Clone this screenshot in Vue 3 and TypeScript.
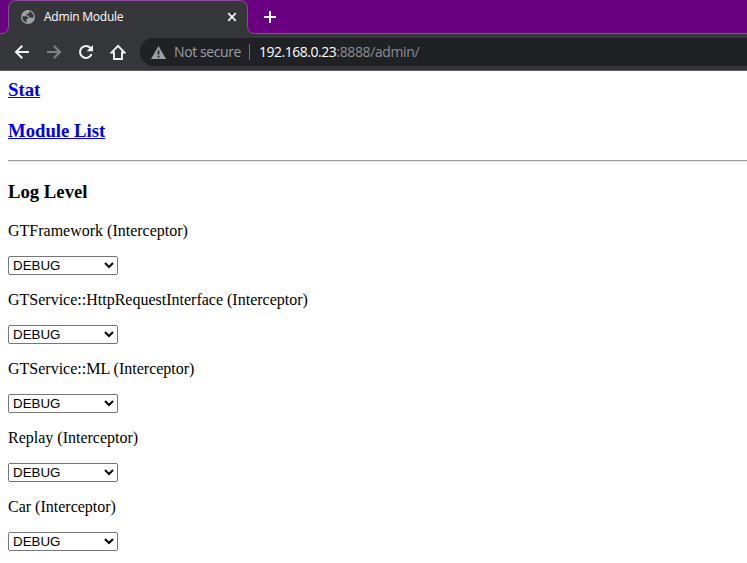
<script setup lang="ts">
import { reactive } from 'vue'

interface LogModule {
  name: string
  level: string
}

const levels: string[] = ['DEBUG', 'INFORMATION', 'WARNING', 'ERROR']

const modules = reactive<LogModule[]>([
  { name: 'GTFramework (Interceptor)', level: 'DEBUG' },
  { name: 'GTService::HttpRequestInterface (Interceptor)', level: 'DEBUG' },
  { name: 'GTService::ML (Interceptor)', level: 'DEBUG' },
  { name: 'Replay (Interceptor)', level: 'DEBUG' },
  { name: 'Car (Interceptor)', level: 'DEBUG' },
])
</script>

<template>
  <div class="window">
    <header class="chrome">
      <div class="tabstrip">
        <svg class="tab-shape" width="747" height="34" viewBox="0 0 747 34">
          <path
            d="M-2 36V33.500H1Q8.500 33.500 8.500 26V8.500Q8.500 .5 16.500 .5H239.500Q247.500 .5 247.500 8.500V25.500Q247.500 33.500 255.500 33.500H750V36Z"
            fill="#35363a"
            stroke="#8f4a9f"
          />
        </svg>
        <div class="tab">
          <svg class="globe" width="16" height="16" viewBox="0 0 16 16">
            <circle cx="8" cy="8" r="7" fill="#9aa0a6" />
            <path
              d="M2.300 7.300H6.200Q8.700 7.600 8.200 9.800H6.500V13.600Q2.600 12.600 2.300 7.300ZM9 2.500Q13 3 13.700 7.300L12.500 9L11 8.500H9.500L8.500 6.600H6.500V4.800H9Z"
              fill="#35363a"
            />
          </svg>
          <span class="tab-title">Admin Module</span>
          <svg class="close" width="10" height="10" viewBox="0 0 10 10">
            <path d="M1.200 1.200L8.800 8.800M8.800 1.200L1.200 8.800" stroke="#f1f3f4" stroke-width="1.700" />
          </svg>
        </div>
        <svg class="new-tab" width="12" height="12" viewBox="0 0 12 12">
          <path d="M6 0V12M0 6H12" stroke="#fff" stroke-width="2" />
        </svg>
      </div>
      <div class="toolbar">
        <div class="nav">
          <svg width="16" height="16" viewBox="0 0 16 16">
            <path d="M15 8H2.500M8.300 1.700L2 8L8.300 14.300" fill="none" stroke="#f1f3f4" stroke-width="2" />
          </svg>
          <svg width="16" height="16" viewBox="0 0 16 16">
            <path d="M1 8H13.500M7.700 1.700L14 8L7.700 14.300" fill="none" stroke="#818286" stroke-width="2" />
          </svg>
          <svg width="16" height="16" viewBox="0 0 16 16">
            <path d="M13.600 10.200A6 6 0 1 1 12.500 4" fill="none" stroke="#f1f3f4" stroke-width="2" />
            <path d="M15 1V7.300H8.700Z" fill="#f1f3f4" />
          </svg>
          <svg width="16" height="16" viewBox="0 0 16 16">
            <path
              d="M1.500 8.500H4V15H12V8.500H14.500L8 1.800Z"
              fill="none"
              stroke="#f1f3f4"
              stroke-width="1.900"
            />
          </svg>
        </div>
        <div class="omnibox">
          <svg class="warning" width="15" height="13" viewBox="0 0 15 13">
            <path d="M7.500 0L15 13H0Z" fill="#9aa0a6" />
            <path d="M7.500 4.500V8.500M7.500 9.700V11.400" stroke="#202124" stroke-width="1.700" />
          </svg>
          <span class="security">Not secure</span>
          <span class="divider"></span>
          <span class="url"><span class="host">192.168.0.23</span><span class="path">:8888/admin/</span></span>
        </div>
      </div>
    </header>

    <main class="page">
      <h3><a href="#">Stat</a></h3>
      <h3><a href="#">Module List</a></h3>
      <hr />
      <h3>Log Level</h3>
      <section v-for="item in modules" :key="item.name" class="module">
        <p>{{ item.name }}</p>
        <select v-model="item.level">
          <option v-for="level in levels" :key="level">{{ level }}</option>
        </select>
      </section>
    </main>
  </div>
</template>

<style>
body {
  margin: 0;
  overflow: hidden;
  background: #fff;
}
</style>

<style scoped>
.window {
  width: 747px;
  height: 563px;
  overflow: hidden;
  background: #fff;
}

.chrome {
  font-family: "Open Sans", "Noto Sans", sans-serif;
}

.tabstrip {
  position: relative;
  display: flex;
  align-items: center;
  height: 34px;
  background: #69007f;
}

.tab-shape {
  position: absolute;
  inset: 0;
}

.tab {
  position: relative;
  display: flex;
  align-items: center;
  box-sizing: border-box;
  width: 248px;
  height: 34px;
  padding: 0 11px 0 20px;
}

.tab-title {
  flex: 1;
  margin-left: 8px;
  font-size: 12px;
  line-height: 16px;
  letter-spacing: -0.22px;
  color: #fff;
  white-space: nowrap;
}

.new-tab {
  position: relative;
  margin-left: 16px;
}

.toolbar {
  display: flex;
  align-items: center;
  box-sizing: border-box;
  height: 37px;
  border-bottom: 1px solid #5c5660;
  background: #35363a;
}

.nav {
  display: flex;
  gap: 16px;
  padding: 0 14px;
}

.omnibox {
  display: flex;
  flex: 1;
  align-items: center;
  height: 28px;
  padding-left: 11px;
  border-radius: 14px 0 0 14px;
  background: #202124;
  font-size: 14px;
  line-height: 20px;
  white-space: nowrap;
}

.security {
  width: 67px;
  margin-left: 8px;
  letter-spacing: -0.4px;
  color: #9aa0a6;
}

.divider {
  width: 1px;
  height: 16px;
  margin: 0 9px 0 8px;
  background: #6f7276;
}

.host {
  letter-spacing: -0.48px;
  color: #fff;
}

.path {
  letter-spacing: -0.38px;
  color: #8a8d91;
}

.page {
  padding: 8px 0 0 8px;
  font-family: "Liberation Serif", "Times New Roman", serif;
  font-size: 16px;
  color: #000;
}

h3 {
  margin: 0 0 18.72px;
  font-size: 18.72px;
  line-height: 22px;
}

a {
  color: #0000ee;
}

hr {
  height: 0;
  margin: 0 0 18.72px;
  border: 0;
  border-top: 1px solid #9a9a9a;
  border-bottom: 1px solid #eeeeee;
}

.module {
  height: 69px;
}

p {
  margin: 0 0 16px;
  line-height: 18px;
}

select {
  display: block;
  width: 110px;
  height: 19px;
  font-family: "Liberation Sans", Arial, sans-serif;
  font-size: 13.333px;
}
</style>
